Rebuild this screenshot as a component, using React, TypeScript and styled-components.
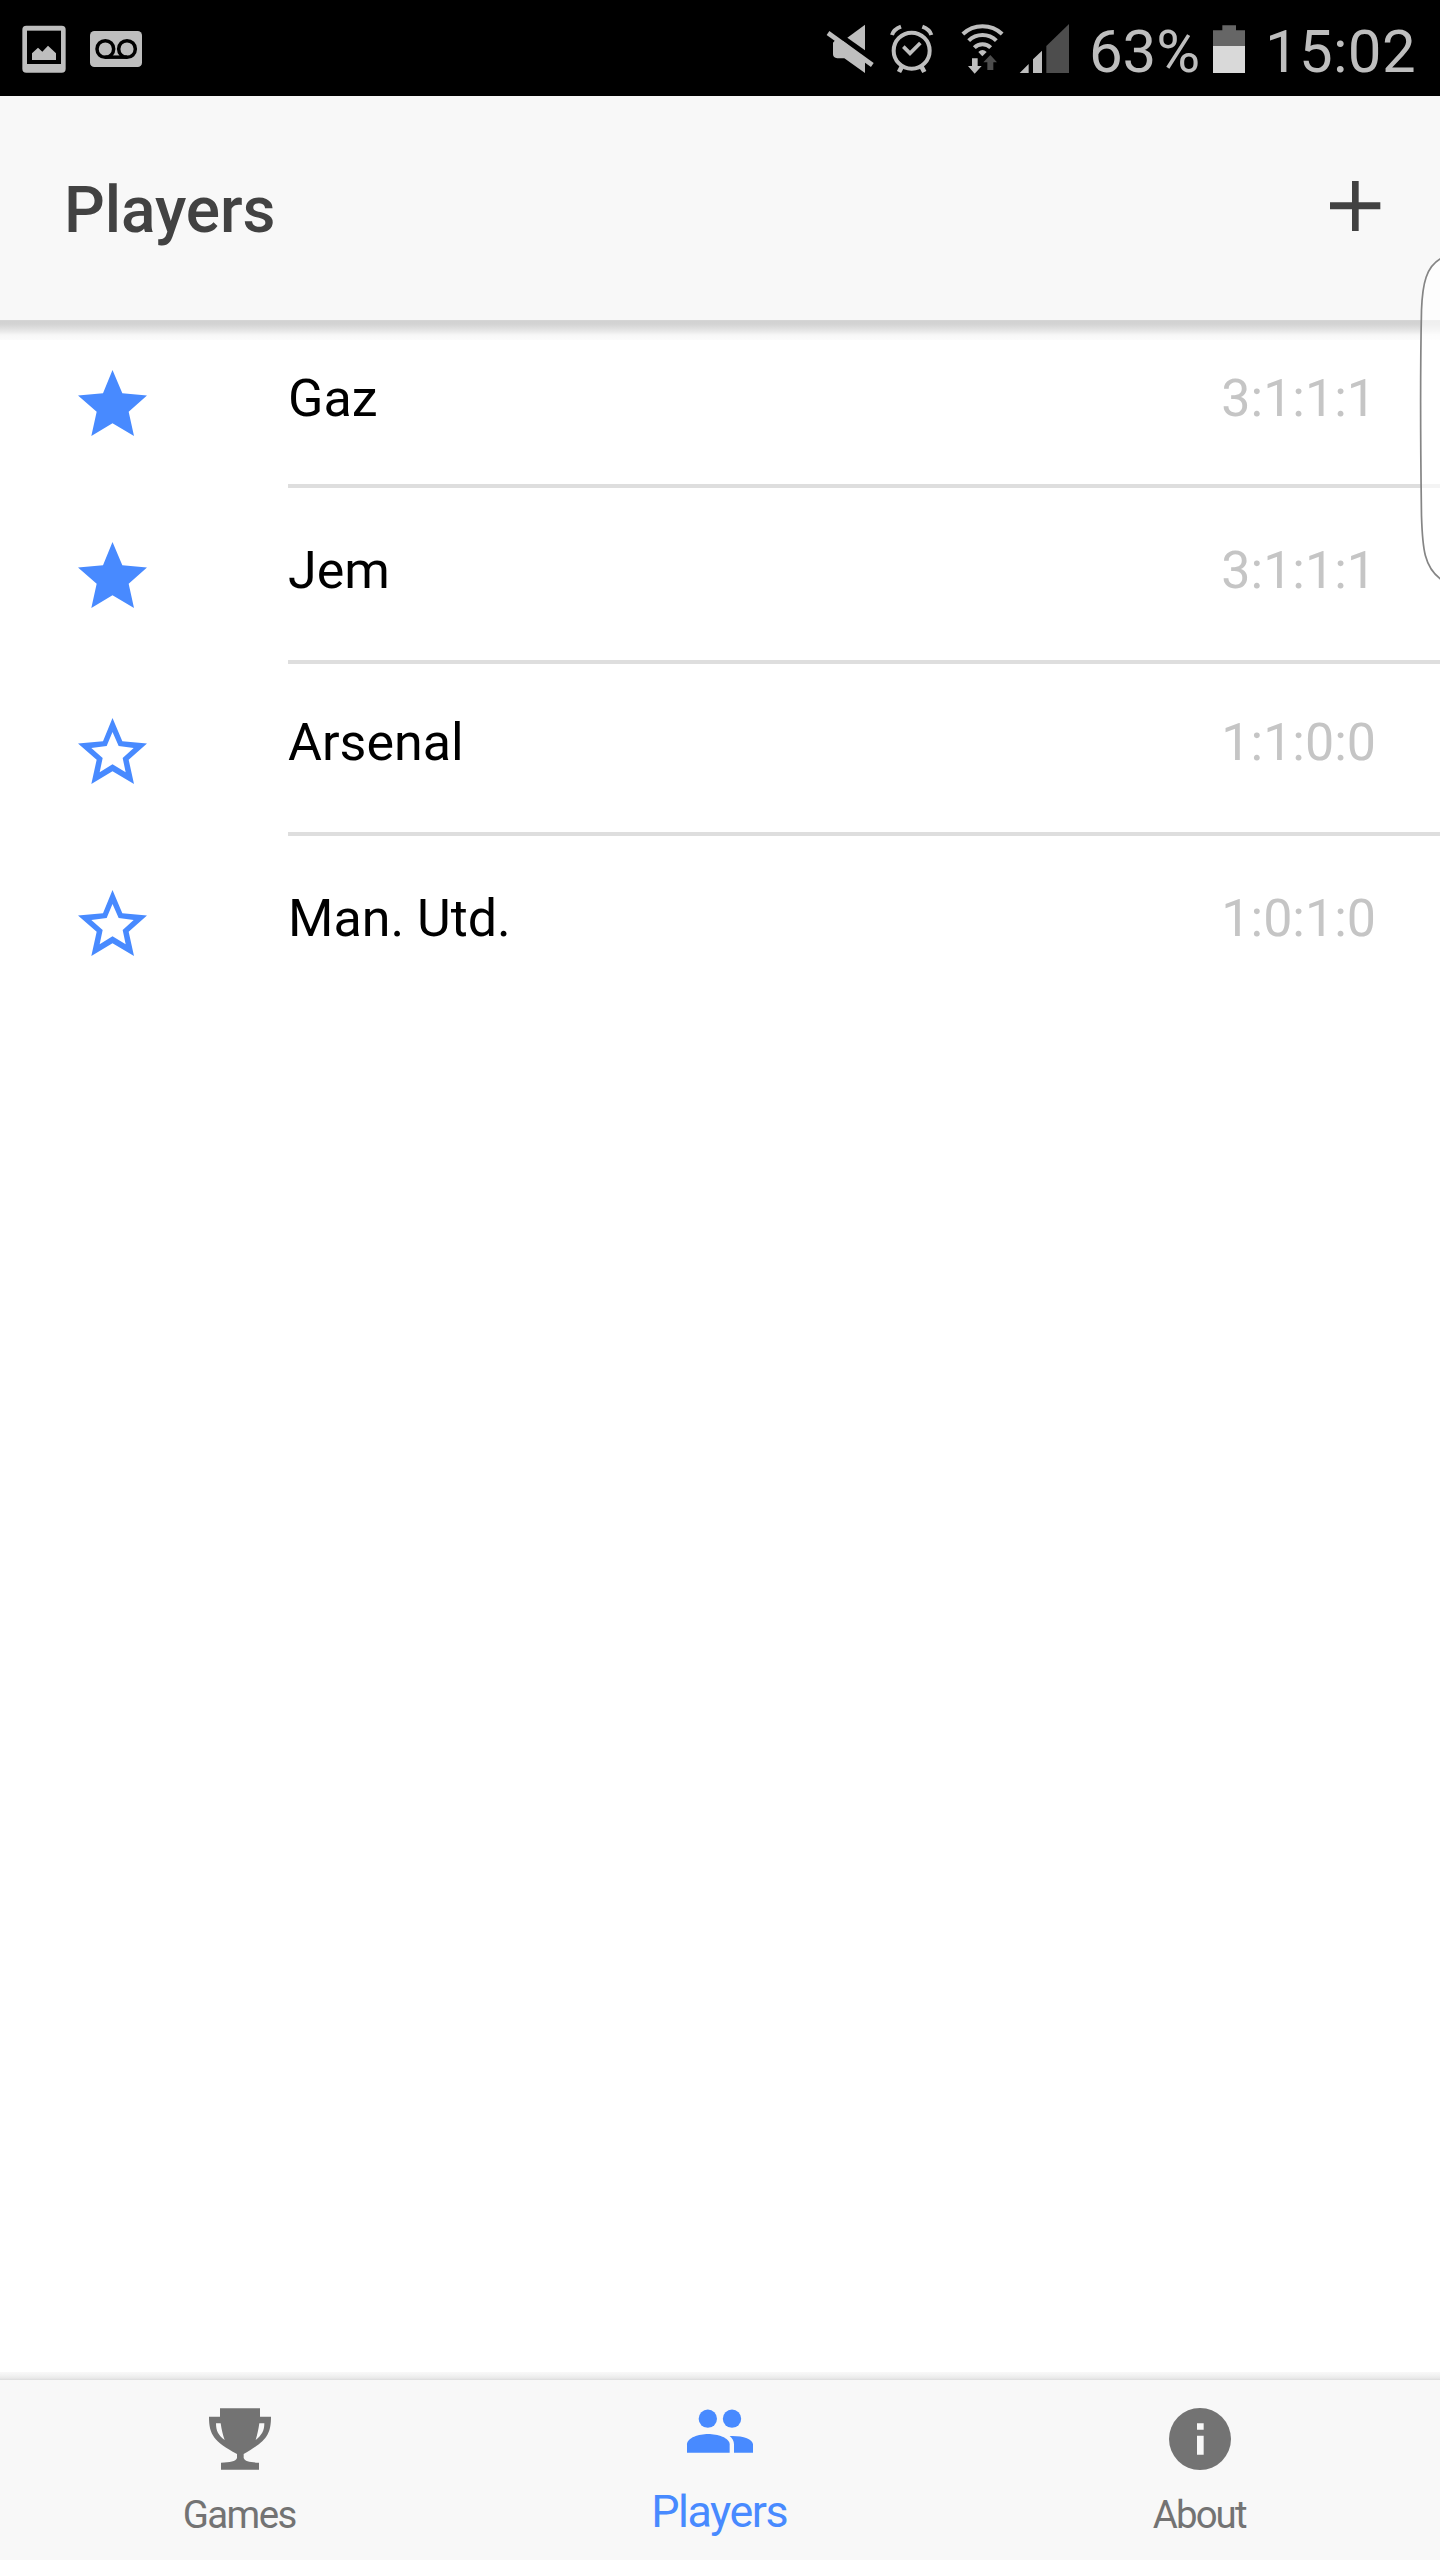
import React from 'react';
import styled, { createGlobalStyle } from 'styled-components';

const BLUE = '#488aff';
const GREY = '#737373';
const STATUS = '#bebebe';

const GlobalStyle = createGlobalStyle`
  * { box-sizing: border-box; }
  body { margin: 0; background: #fff; font-family: Roboto, "Noto Sans", sans-serif; }
  svg { display: block; flex: none; }
`;

const Screen = styled.div`
  position: relative;
  display: flex;
  flex-direction: column;
  width: 1440px;
  height: 2560px;
  overflow: hidden;
  background: #fff;
`;

const StatusBar = styled.div`
  display: flex;
  flex: none;
  height: 96px;
  padding: 0 22px;
  background: #000;
  color: ${STATUS};
`;

const StatusGroup = styled.div<{ $end?: boolean }>`
  display: flex;
  margin-left: ${(p) => (p.$end ? 'auto' : '0')};
`;

const StatusIcon = styled.svg<{ $gap?: number }>`
  height: 96px;
  margin-left: ${(p) => p.$gap ?? 0}px;
  fill: ${STATUS};
`;

const StatusText = styled.span<{ $gap: number; $width: number; $spacing: number }>`
  width: ${(p) => p.$width}px;
  margin: 16px 0 0 ${(p) => p.$gap}px;
  font-size: 60px;
  line-height: 71px;
  letter-spacing: ${(p) => p.$spacing}px;
  white-space: nowrap;
`;

const Toolbar = styled.header`
  position: relative;
  display: flex;
  flex: none;
  justify-content: space-between;
  align-items: flex-start;
  height: 224px;
  padding: 77px 59px 0 64px;
  background: #f8f8f8;
  color: #424242;

  &::after {
    content: '';
    position: absolute;
    top: 100%;
    left: 0;
    right: 0;
    height: 20px;
    background: linear-gradient(
      #d8d8d8 0,
      #d2d2d2 1px,
      #d3d3d3 4px,
      #dedede 8px,
      #ebebeb 12px,
      #f7f7f7 15px,
      #fbfbfb 20px
    );
  }
`;

const Title = styled.h1`
  margin: 0;
  font-size: 64px;
  font-weight: 500;
  line-height: 75px;
  letter-spacing: -0.1px;
`;

const AddButton = styled.button`
  display: flex;
  margin: 8px 0 0;
  padding: 0;
  border: 0;
  background: none;
  color: inherit;
`;

const List = styled.ul`
  flex: 1;
  margin: 0;
  padding: 0;
  list-style: none;
`;

const Row = styled.li<{ $height: number }>`
  display: flex;
  height: ${(p) => p.$height}px;
  padding-left: 77.5px;
`;

const StarCell = styled.div<{ $top: number }>`
  width: 210.5px;
  padding-top: ${(p) => p.$top}px;
  color: ${BLUE};
`;

const RowBody = styled.div<{ $top: number; $last: boolean }>`
  display: flex;
  flex: 1;
  justify-content: space-between;
  padding: ${(p) => p.$top}px 64px 0 0;
  border-bottom: ${(p) => (p.$last ? '0' : '4px solid #dedede')};
  font-size: 52px;
  line-height: 61px;
`;

const Name = styled.span`
  color: #000;
`;

const Score = styled.span`
  color: #c5c5c5;
`;

const EdgeHandle = styled.svg`
  position: absolute;
  top: 256px;
  right: 0;
`;

const TabBar = styled.nav`
  position: relative;
  display: grid;
  grid-template-columns: repeat(3, 1fr);
  flex: none;
  height: 180px;
  background: #f8f8f8;

  &::before {
    content: '';
    position: absolute;
    bottom: 100%;
    left: 0;
    right: 0;
    height: 8px;
    background: linear-gradient(#f8f8f8 0, #f3f3f3 3px, #eaeaea 6px, #dcdcdc 8px);
  }
`;

const Tab = styled.a<{ $active?: boolean }>`
  display: flex;
  flex-direction: column;
  align-items: center;
  gap: ${(p) => (p.$active ? 15 : 22)}px;
  padding-top: 28px;
  color: ${(p) => (p.$active ? BLUE : GREY)};
`;

const TabLabel = styled.span<{ $active?: boolean; $spacing: number }>`
  margin-right: 1.6px;
  font-size: ${(p) => (p.$active ? 44.8 : 38.4)}px;
  line-height: ${(p) => (p.$active ? 53 : 45)}px;
  letter-spacing: ${(p) => p.$spacing}px;
`;

type Player = { name: string; score: string; favourite: boolean; height: number; starTop: number; textTop: number };

const players: Player[] = [
  { name: 'Gaz', score: '3:1:1:1', favourite: true, height: 168, starTop: 50, textTop: 48 },
  { name: 'Jem', score: '3:1:1:1', favourite: true, height: 176, starTop: 54, textTop: 52 },
  { name: 'Arsenal', score: '1:1:0:0', favourite: false, height: 172, starTop: 54, textTop: 48 },
  { name: 'Man. Utd.', score: '1:0:1:0', favourite: false, height: 172, starTop: 54, textTop: 52 },
];

const Star = ({ filled }: { filled: boolean }) => (
  <svg width="69" height="66" viewBox="0 0 207 198" fill="currentColor" fillRule="evenodd">
    <path
      d={
        'M103.500 0L133 70L207 76.500L152 125L168 198L103.500 160L40 198L56 125L0 76.500L75 70Z' +
        (filled ? '' : 'M103.500 42L86 84L40 90L74 120L65 163L103.500 139L143 163L134 120L167 90L122 84Z')
      }
    />
  </svg>
);

const TrophyIcon = () => (
  <svg width="62" height="62" viewBox="207 145 186 186" fill="currentColor" fillRule="evenodd">
    <path d="M240 146H360V171H393C393 225 378 245 311 283V295C315 306 330 308 357 309V330H243V309C270 308 287 306 291 295V283C222 245 207 225 207 171H240ZM228 191C228 214 235 227 254 241C248 225 245 211 242 191ZM373 191H358C355 211 352 225 347 241C365 227 373 214 373 191Z" />
  </svg>
);

const PeopleIcon = () => (
  <svg width="68" height="62" viewBox="258 145 204 186" fill="currentColor">
    <circle cx="323.500" cy="177" r="27.500" />
    <circle cx="396" cy="177" r="27.500" />
    <path d="M261 279V254C261 234 297 223 324.500 223S389 234 389 254V279Z" />
    <path d="M402 279V254C402 244 397 236 389 229C425 227 459 238 459 254V279Z" />
  </svg>
);

const InfoIcon = () => (
  <svg width="62" height="62" viewBox="267 145 186 186" fill="currentColor">
    <circle cx="360" cy="238" r="93" />
    <path fill="#f8f8f8" d="M351 191H371V210H351ZM351 228H371V285H351Z" />
  </svg>
);

export default function App() {
  return (
    <>
      <GlobalStyle />
      <Screen>
        <StatusBar>
          <StatusGroup>
            <StatusIcon width="44" viewBox="66 0 132 288">
              <rect x="67" y="77" width="130" height="141" rx="12" />
              <rect x="81" y="92" width="102" height="100" fill="#000" />
              <path d="M96 180V160L114 143L127 155L144 137L168 160V180Z" />
            </StatusIcon>
            <StatusIcon $gap={24} width="52" viewBox="270 0 156 288">
              <rect x="270" y="93" width="156" height="108" rx="13" />
              <g fill="none" stroke="#000" strokeWidth="10.500">
                <circle cx="316" cy="147" r="25" />
                <circle cx="381" cy="147" r="25" />
                <path d="M316 171.500H381" />
              </g>
            </StatusIcon>
          </StatusGroup>

          <StatusGroup $end>
            <StatusIcon width="48" viewBox="48 0 144 288">
              <path d="M112 113L165 74V151Z" />
              <path d="M69 128L76 120L100 124L165 174V219L103 175H82Q69 173 69 163Z" />
              <path d="M54 99L187 195" stroke={STATUS} strokeWidth="14" />
            </StatusIcon>
            <StatusIcon $gap={16} width="44" viewBox="240 0 132 288">
              <g fill="none" stroke={STATUS} strokeWidth="12">
                <circle cx="305" cy="152" r="54" />
                <path d="M280 140L300 160L331 129" strokeWidth="11" />
                <path d="M246 105Q251 88 273 80M364 105Q359 88 337 80" />
                <path d="M276 199L267 216M334 199L343 216" strokeWidth="14" />
              </g>
            </StatusIcon>
            <StatusIcon $gap={27} width="44" viewBox="453 0 132 288">
              <g fill="none" stroke={STATUS} strokeWidth="12">
                <path d="M458.500 102A86.500 86.500 0 0 1 576.500 102" />
                <path d="M476 122A59 59 0 0 1 559 122" />
                <path d="M493 143A34 34 0 0 1 542 143" />
              </g>
              <path d="M517 169L505 156Q517 144 530 156Z" />
              <path d="M486 175H503V198H515L494 221L474 198H486Z" />
              <path fill="#4d4d4d" d="M541 165L561 187H550V210H532V187H520Z" />
            </StatusIcon>
            <StatusIcon $gap={14} width="51" viewBox="627 0 153 288">
              <path d="M629 219L656 192V219ZM669 219V178L696 152V219Z" />
              <path fill="#4d4d4d" d="M709 219V138L777 72V219Z" />
            </StatusIcon>
            <StatusText $gap={19} $width={113} $spacing={-0.1}>63%</StatusText>
            <StatusIcon $gap={11} width="32" viewBox="429 0 96 288">
              <path fill="#666" d="M457 76H498V91H525V138H429V91H457Z" />
              <path fill="#d9d9d9" d="M429 138H525V219H429Z" />
            </StatusIcon>
            <StatusText $gap={20} $width={153} $spacing={0.3}>15:02</StatusText>
          </StatusGroup>
        </StatusBar>

        <Toolbar>
          <Title>Players</Title>
          <AddButton aria-label="Add player">
            <svg width="51" height="50" viewBox="510 123 153 150" fill="currentColor">
              <path d="M576 123H596V187H661V208H596V273H576V208H510V187H576Z" />
            </svg>
          </AddButton>
        </Toolbar>

        <List>
          {players.map((p, i) => (
            <Row key={p.name} $height={p.height}>
              <StarCell $top={p.starTop}>
                <Star filled={p.favourite} />
              </StarCell>
              <RowBody $top={p.textTop} $last={i === players.length - 1}>
                <Name>{p.name}</Name>
                <Score>{p.score}</Score>
              </RowBody>
            </Row>
          ))}
        </List>

        <EdgeHandle width="22" height="328" viewBox="0 0 22 328">
          <path
            d="M24 2C8 10 4.500 28 3.500 54C2.500 100 2.500 190 3.500 260C4.500 292 6 312 24 324"
            fill="rgba(255,255,255,0.65)"
            stroke="#858585"
            strokeWidth="1.700"
          />
        </EdgeHandle>

        <TabBar>
          <Tab>
            <TrophyIcon />
            <TabLabel $spacing={-1.6}>Games</TabLabel>
          </Tab>
          <Tab $active>
            <PeopleIcon />
            <TabLabel $active $spacing={-1.45}>Players</TabLabel>
          </Tab>
          <Tab>
            <InfoIcon />
            <TabLabel $spacing={-1.9}>About</TabLabel>
          </Tab>
        </TabBar>
      </Screen>
    </>
  );
}
